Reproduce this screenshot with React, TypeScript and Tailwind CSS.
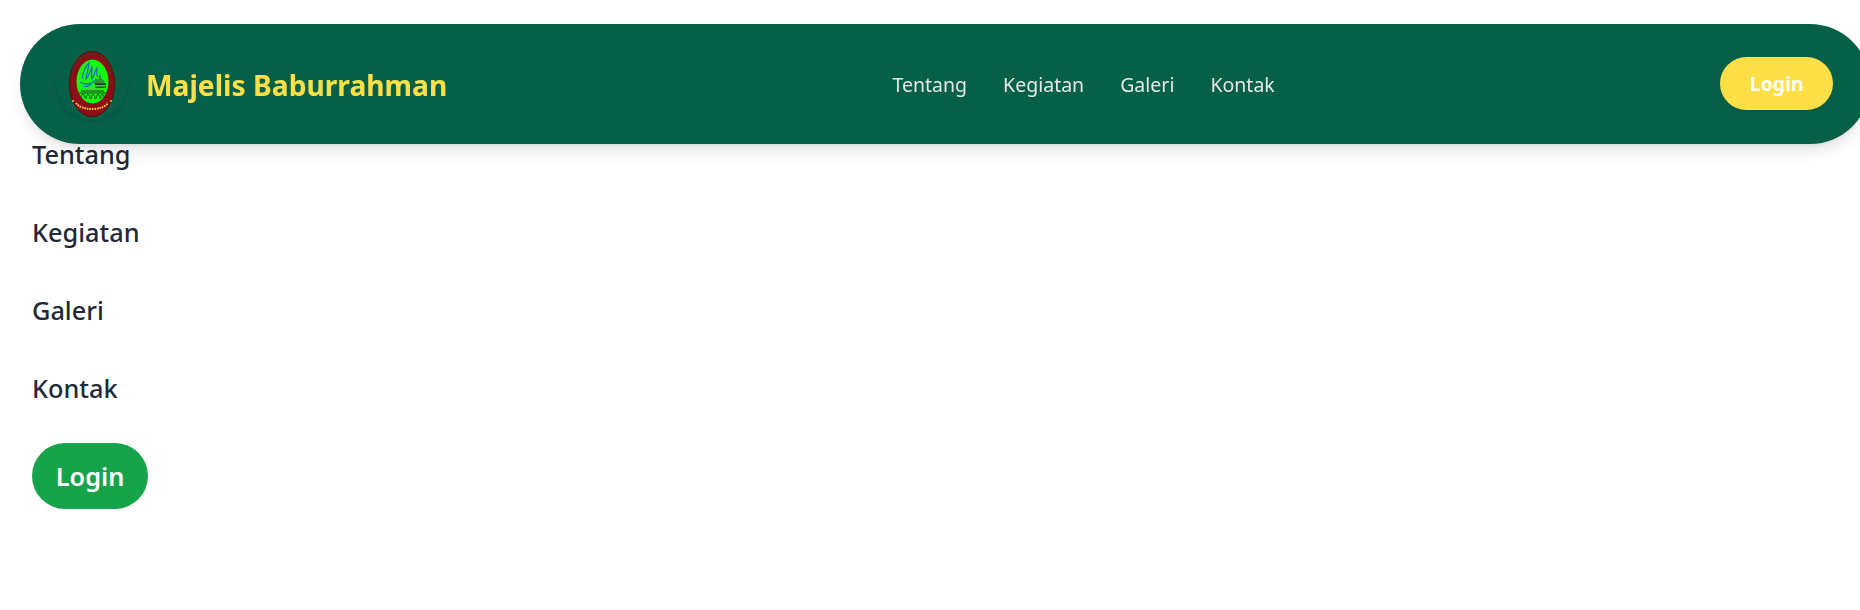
const font = { fontFamily: '"Noto Sans", "Open Sans", sans-serif' };

function Logo() {
  return (
    <svg width="72" height="72" viewBox="0 0 72 72" className="rounded-full shadow-sm" aria-hidden="true">
      <ellipse cx="36" cy="36" rx="23" ry="33" fill="#8f0d16" />
      <ellipse cx="36" cy="36" rx="22.5" ry="32.5" fill="none" stroke="#4a1410" strokeWidth="1" />
      <path d="M16.5 26 C18 13 27 6 36 6 C45 6 54 13 55.5 26" fill="none" stroke="#5a2a20" strokeWidth="2.6" strokeDasharray="2.4 1.2" />
      <path d="M20 55 C25 63 47 63 52 55" fill="none" stroke="#f3c63f" strokeWidth="2" strokeDasharray="1.6 0.9" />
      <circle cx="17" cy="53" r="1" fill="#f3c63f" />
      <circle cx="55" cy="53" r="1" fill="#f3c63f" />
      <ellipse cx="36.5" cy="33.5" rx="16" ry="22" fill="#17f80c" />
      <path d="M26 31c1-6 3-12 7-16 0 6-3 11-3 16 3-3 4-8 6-12 1 4-2 8 0 12 2-3 3-8 5-11 0 4-1 7 1 9M24 34c4 3 11 3 17-3M27 38c3 1 6 0 8-2" fill="none" stroke="#1f6fc0" strokeWidth="1.3" />
      <path d="M44 24l1.2 7c2 .6 3.6 2.5 4 5h-11c.4-2.5 2-4.4 4.5-5z" fill="#2f8f35" />
      <path d="M39 35.5h11v1.6H39zM39 38.5h11v1.2H39z" fill="#0c3d14" />
      <path d="M24 45c4-4 8-5.5 12.5-5.5 4.5 0 8.500 1.500 12.500 5.500" fill="#3fd93a" />
      <path d="M23 45h27M25 43h23" stroke="#0b4a14" strokeWidth="1" />
      <path d="M25 50c0-5 4-5 4 0M30 51c0-6 4-6 4 0M35 51c0-6 4-6 4 0M40 51c0-6 4-6 4 0M45 50c0-5 3-5 3 0" fill="none" stroke="#0d5a16" strokeWidth="1" />
    </svg>
  );
}

export default function App() {
  return (
    <div className="bg-white min-h-[610px] overflow-hidden text-[#1f2937]" style={font}>
      <nav className="fixed top-6 left-5 w-[1850px] h-[120px] rounded-full bg-[#066048] shadow-lg flex items-center justify-between pl-[36px] pr-[37px]">
        <div className="flex items-center gap-[18px]">
          <Logo />
          <span className="text-[28.2px] font-bold text-[#fde047] translate-y-px">Majelis Baburrahman</span>
        </div>
        <div className="flex items-center gap-[36px] text-[19.5px] text-[#e5e7eb] translate-y-px">
          <a>Tentang</a>
          <a>Kegiatan</a>
          <a>Galeri</a>
          <a>Kontak</a>
        </div>
        <button className="w-[113px] h-[53px] mb-px rounded-full bg-[#fde047] text-white font-bold text-[19.5px] shadow-sm">Login</button>
      </nav>
      <ul className="flex flex-col gap-[46px] pl-8 pt-[138px] text-[25.3px] font-medium leading-8">
        <li>Tentang</li>
        <li>Kegiatan</li>
        <li>Galeri</li>
        <li>Kontak</li>
        <li>
          <button className="w-[116px] h-[66px] -mt-[7px] rounded-full bg-[#16a34a] text-white font-semibold text-[25.3px] block">Login</button>
        </li>
      </ul>
    </div>
  );
}
